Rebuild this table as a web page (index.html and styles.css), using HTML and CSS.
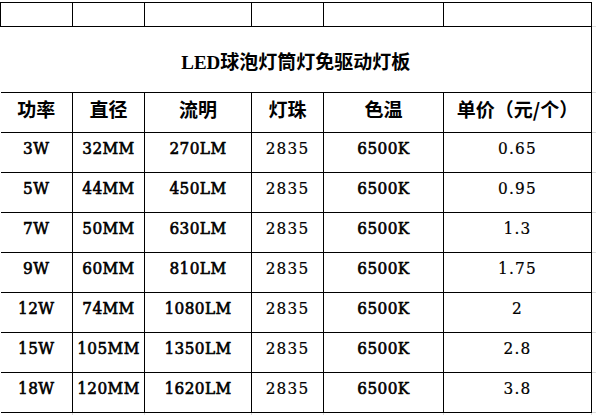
FILE: index.html
```html
<!DOCTYPE html>
<html lang="zh-CN">
<head>
<meta charset="utf-8">
<title>LED球泡灯筒灯免驱动灯板</title>
<link rel="stylesheet" href="styles.css">
</head>
<body>
<table class="sheet">
  <colgroup>
    <col class="c1"><col class="c2"><col class="c3"><col class="c4"><col class="c5"><col class="c6"><col class="cx">
  </colgroup>
  <tr class="r-top">
    <td class="lead"></td><td></td><td></td><td></td><td></td><td></td><td class="gx"></td>
  </tr>
  <tr class="r-title">
    <td colspan="6" class="title">LED球泡灯筒灯免驱动灯板</td><td class="gx"></td>
  </tr>
  <tr class="r-head">
    <th>功率</th><th>直径</th><th>流明</th><th>灯珠</th><th>色温</th><th>单价（元/个）</th><td class="gx"></td>
  </tr>
  <tr class="r-data">
    <td>3W</td><td>32MM</td><td>270LM</td><td class="lt">2835</td><td>6500K</td><td class="lt">0.65</td><td class="gx"></td>
  </tr>
  <tr class="r-data">
    <td>5W</td><td>44MM</td><td>450LM</td><td class="lt">2835</td><td>6500K</td><td class="lt">0.95</td><td class="gx"></td>
  </tr>
  <tr class="r-data">
    <td>7W</td><td>50MM</td><td>630LM</td><td class="lt">2835</td><td>6500K</td><td class="lt">1.3</td><td class="gx"></td>
  </tr>
  <tr class="r-data">
    <td>9W</td><td>60MM</td><td>810LM</td><td class="lt">2835</td><td>6500K</td><td class="lt">1.75</td><td class="gx"></td>
  </tr>
  <tr class="r-data">
    <td>12W</td><td>74MM</td><td>1080LM</td><td class="lt">2835</td><td>6500K</td><td class="lt">2</td><td class="gx"></td>
  </tr>
  <tr class="r-data">
    <td>15W</td><td>105MM</td><td>1350LM</td><td class="lt">2835</td><td>6500K</td><td class="lt">2.8</td><td class="gx"></td>
  </tr>
  <tr class="r-data">
    <td>18W</td><td>120MM</td><td>1620LM</td><td class="lt">2835</td><td>6500K</td><td class="lt">3.8</td><td class="gx"></td>
  </tr>
  <tr class="r-tail">
    <td></td><td></td><td></td><td></td><td></td><td></td><td class="gy"></td>
  </tr>
</table>
</body>
</html>
```
FILE: styles.css
```css
html, body {
  margin: 0;
  padding: 0;
  background: #ffffff;
}

body {
  padding-top: 2px;
}

.sheet {
  border-collapse: collapse;
  table-layout: fixed;
  width: 596px;
  color: #000000;
  font-family: "DejaVu Serif", "Noto Sans CJK SC", serif;
}

.c1 { width: 72px; }
.c2 { width: 72px; }
.c3 { width: 107px; }
.c4 { width: 72px; }
.c5 { width: 120px; }
.c6 { width: 148px; }
.cx { width: 5px; }

.sheet td,
.sheet th {
  border: 1px solid #000000;
  padding: 0;
  text-align: center;
  white-space: nowrap;
  overflow: hidden;
}

.sheet tr > :first-child {
  border-left: none;
}

.sheet tr > .lead {
  border-left: 1px solid #000000;
}

.sheet td.gx {
  border: none;
  border-bottom: 1px solid #dcdcdc;
}

.r-top { height: 24px; }

.r-title { height: 66px; }

.sheet td.title {
  font-family: "Liberation Serif", "Noto Sans CJK SC", serif;
  font-size: 19px;
  font-weight: 700;
  vertical-align: middle;
  padding-top: 6px;
  line-height: 24px;
}

.r-head { height: 40px; }

.r-head th {
  font-family: "Noto Sans CJK SC", sans-serif;
  font-size: 19px;
  font-weight: 700;
  line-height: 22px;
  vertical-align: middle;
  padding-bottom: 8px;
}

.r-data { height: 40px; }

.r-data td {
  font-size: 17px;
  font-weight: 400;
  font-stretch: condensed;
  letter-spacing: 0.4px;
  -webkit-text-stroke: 0.6px #000000;
  line-height: 20px;
  vertical-align: middle;
  padding-bottom: 10px;
}

.r-data td.lt {
  letter-spacing: 1.2px;
  -webkit-text-stroke: 0.2px #000000;
}

.r-tail { height: 3px; }

.sheet .r-tail td {
  border: none;
  border-right: 1px solid #dcdcdc;
  height: 3px;
}

.sheet .r-tail td.gy {
  border-right: none;
}
```
